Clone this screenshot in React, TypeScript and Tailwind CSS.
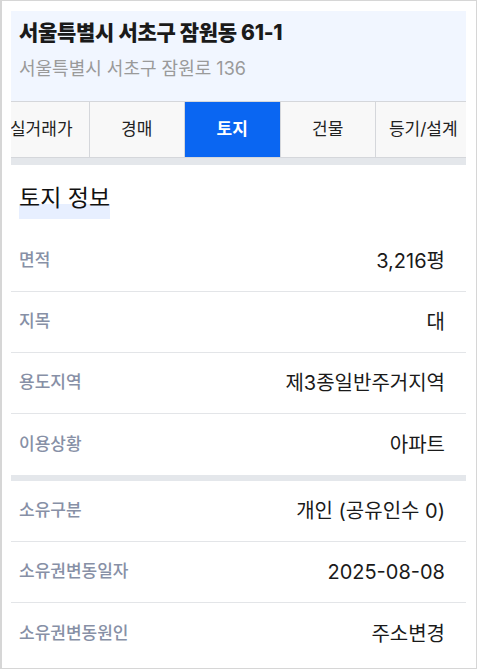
import React from "react";

const font = { fontFamily: 'Inter, "Noto Sans CJK KR", "Noto Sans", sans-serif' };

function Row({ label, value, last }: { label: string; value: string; last?: boolean }) {
  return (
    <div className={`flex h-[61px] items-center justify-between px-2 ${last ? "" : "border-b border-[#e3e5e8]"}`}>
      <span className="text-[17px] font-medium text-[#8790a6]">{label}</span>
      <span className="mr-[13px] text-[20px] text-[#1a1a1a]">{value}</span>
    </div>
  );
}

export default function App() {
  const tabs = ["실거래가", "경매", "토지", "건물", "등기/설계"];
  return (
    <div style={font} className="h-[669px] w-[477px] overflow-hidden border border-l-2 border-[#d6d6d6] bg-white px-[10px] pt-[10px] pl-[9px]">
      <div className="bg-[#f1f6ff] px-2 pt-[7px] h-[90px]">
        <div className="text-[21px] font-extrabold leading-[30px] text-[#1a1a1a] tracking-[-0.3px]">서울특별시 서초구 잠원동 61-1</div>
        <div className="mt-[8px] text-[18px] leading-[26px] text-[#9a9a9a]">서울특별시 서초구 잠원로 136</div>
      </div>
      <div className="h-[57px] overflow-hidden border-y border-[#d5d7db] bg-[#f8f8f8]">
        <div className="ml-[-17px] flex h-full">
          {tabs.map((t, i) => (
            <div
              key={t}
              className={`flex h-full w-[95.5px] shrink-0 items-center justify-center border-r border-[#d5d7db] text-[17px] ${
                i === 2 ? "bg-[#0a66f2] font-bold text-white" : "text-[#222]"
              }`}
            >
              {t}
            </div>
          ))}
        </div>
      </div>
      <div className="h-[7px] bg-[#e4e7eb]" />
      <div className="flex h-[66px] items-center px-2">
        <span className="relative text-[23px] font-normal text-[#111]">
          <span className="absolute bottom-[-4px] left-0 right-0 h-[15px] bg-[#e7efff]" />
          <span className="relative">토지 정보</span>
        </span>
      </div>
      <Row label="면적" value="3,216평" />
      <Row label="지목" value="대" />
      <Row label="용도지역" value="제3종일반주거지역" />
      <Row label="이용상황" value="아파트" last />
      <div className="h-[6px] bg-[#e4e7eb]" />
      <Row label="소유구분" value="개인 (공유인수 0)" />
      <Row label="소유권변동일자" value="2025-08-08" />
      <Row label="소유권변동원인" value="주소변경" last />
    </div>
  );
}
